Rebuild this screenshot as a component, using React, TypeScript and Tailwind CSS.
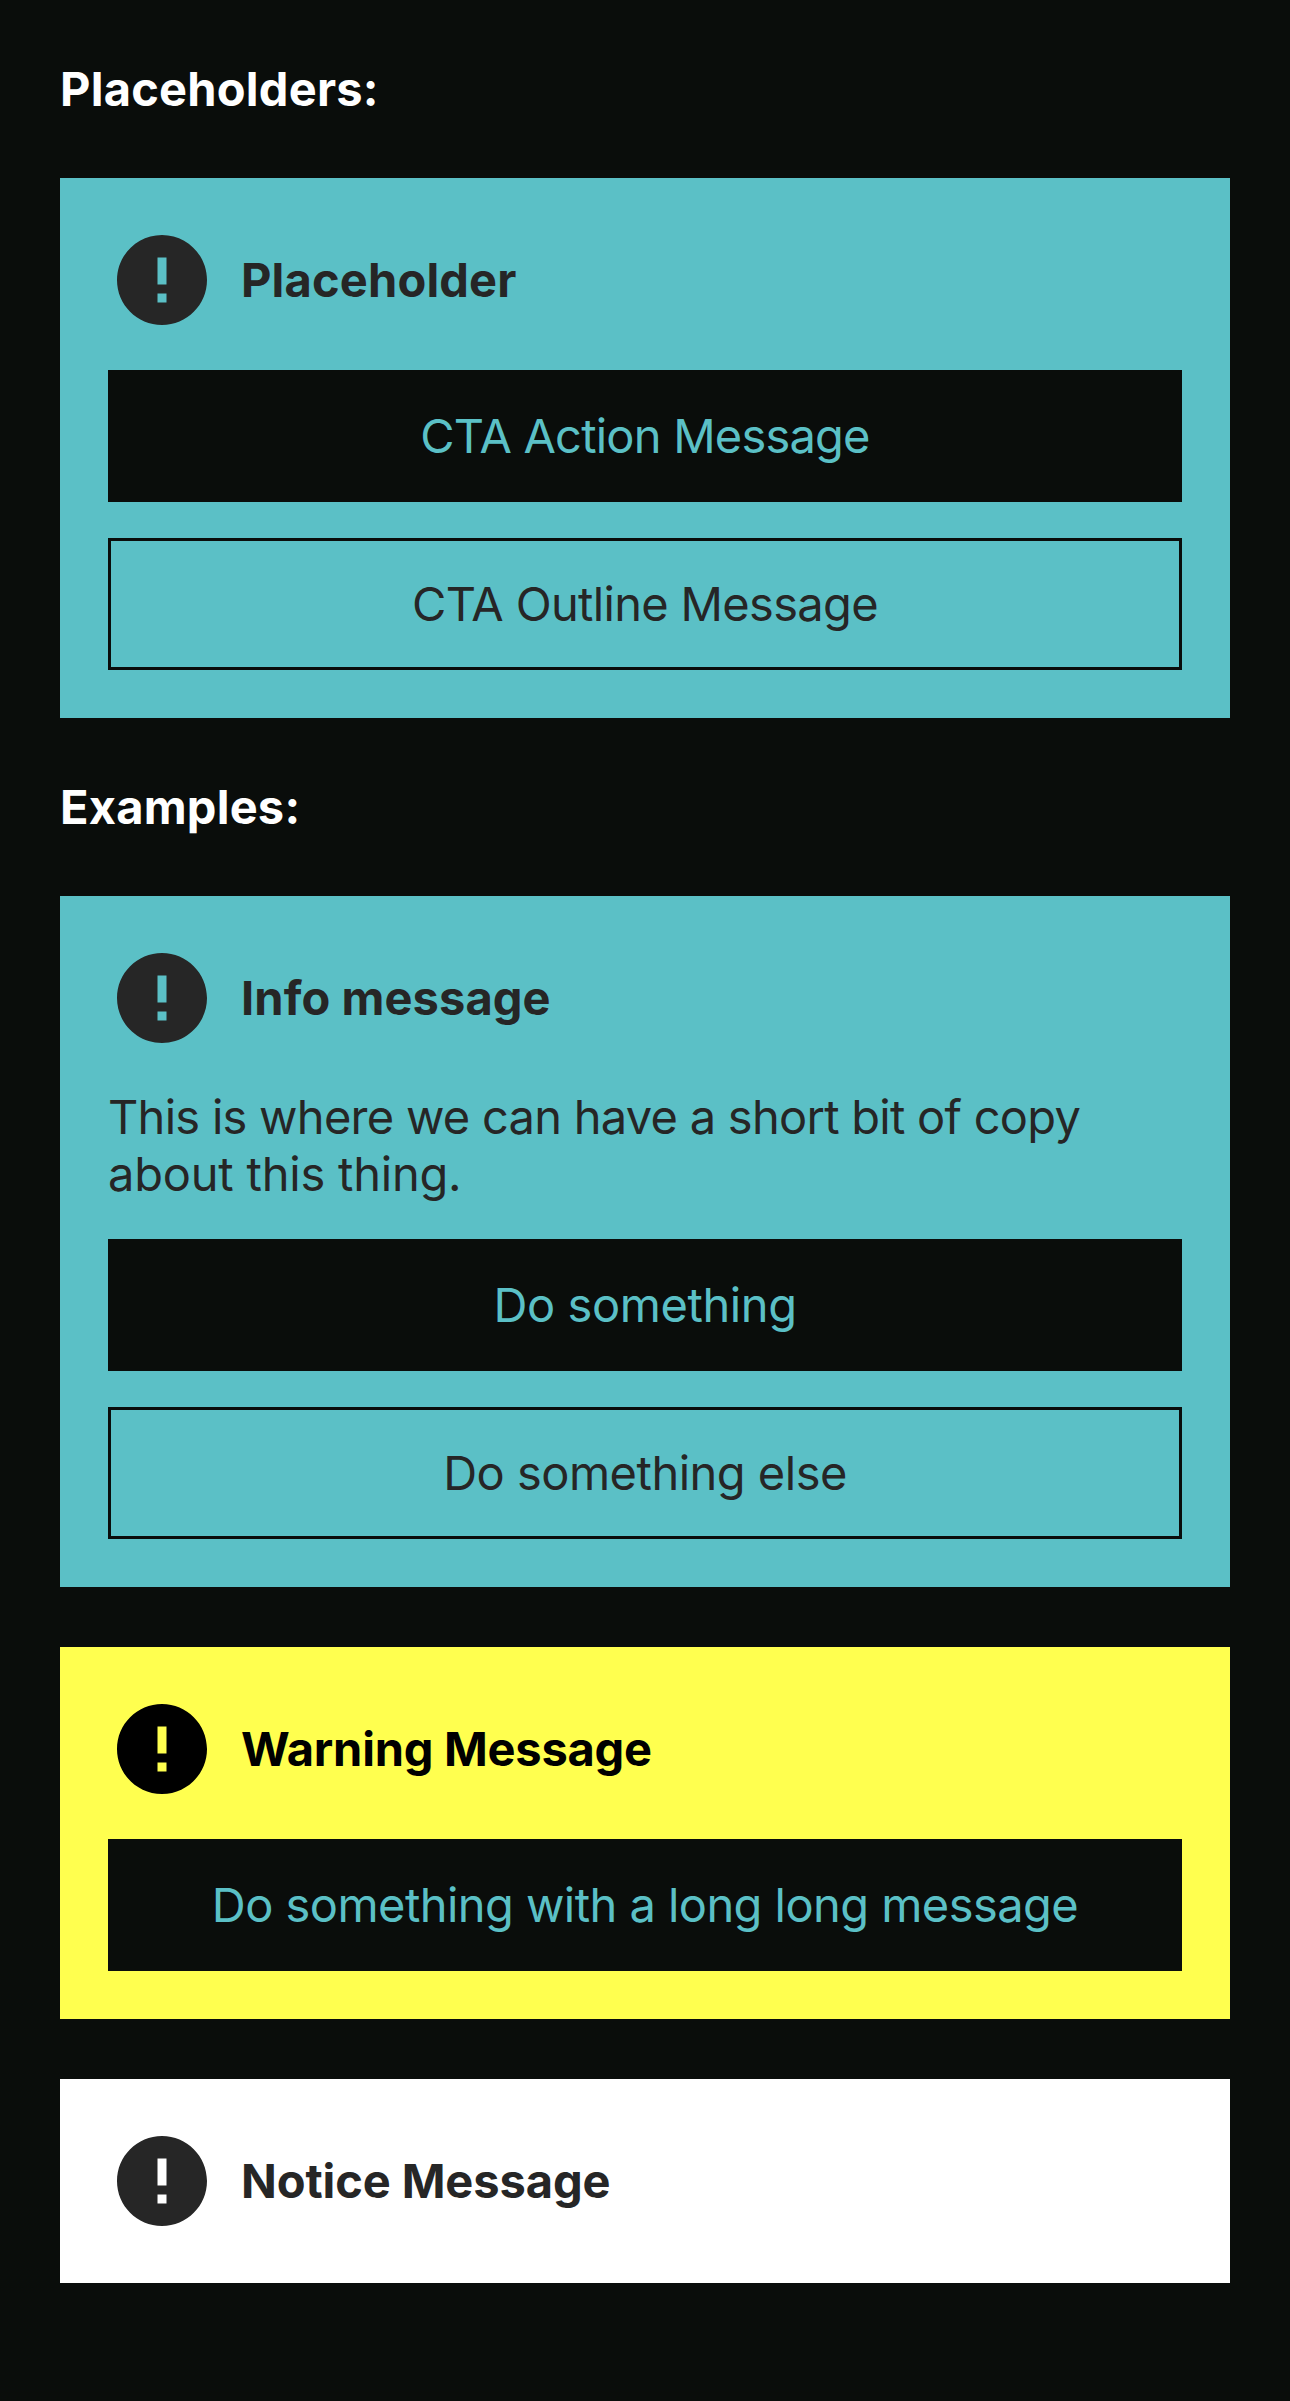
import type { ReactNode } from 'react';

function ErrorIcon() {
  return (
    <svg viewBox="0 0 24 24" className="size-27 shrink-0" fill="currentColor" aria-hidden="true">
      <path d="M12 2C6.48 2 2 6.48 2 12s4.48 10 10 10 10-4.48 10-10S17.52 2 12 2zm1 15h-2v-2h2v2zm0-4h-2V7h2v6z" />
    </svg>
  );
}

function SectionHeading({ children }: { children: ReactNode }) {
  return <h2 className="h-[58px] leading-[58px] font-bold tracking-[0.23px] text-white">{children}</h2>;
}

type CardProps = {
  title: string;
  tone: string;
  titleTracking: string;
  children?: ReactNode;
};

function MessageCard({ title, tone, titleTracking, children }: CardProps) {
  return (
    <section className={`flex flex-col gap-9 p-12 ${tone}`}>
      <header className="flex items-center gap-[25px]">
        <ErrorIcon />
        <h3 className={`pb-px font-bold ${titleTracking}`}>{title}</h3>
      </header>
      {children}
    </section>
  );
}

function ActionButton({ tracking, children }: { tracking: string; children: ReactNode }) {
  return (
    <button className={`flex h-33 w-full items-center justify-center bg-[#0a0d0b] pb-px text-[#5bc0c6] ${tracking}`}>
      {children}
    </button>
  );
}

function OutlineButton({ tracking, children }: { tracking: string; children: ReactNode }) {
  return (
    <button className={`flex h-33 w-full items-center justify-center border-3 border-[#0a0d0b] pb-px ${tracking}`}>
      {children}
    </button>
  );
}

export default function App() {
  return (
    <main className="flex min-h-[2401px] w-full flex-col gap-15 bg-[#0a0d0b] p-15 font-['Inter',sans-serif] text-[47px] leading-[57px]">
      <SectionHeading>Placeholders:</SectionHeading>

      <MessageCard title="Placeholder" tone="bg-[#5bc0c6] text-[#262626]" titleTracking="tracking-[0.17px]">
        <ActionButton tracking="tracking-[-0.79px]">CTA Action Message</ActionButton>
        <OutlineButton tracking="tracking-[-0.67px]">CTA Outline Message</OutlineButton>
      </MessageCard>

      <SectionHeading>Examples:</SectionHeading>

      <MessageCard title="Info message" tone="bg-[#5bc0c6] text-[#262626]" titleTracking="tracking-[0.09px]">
        <p className="flex h-[115px] flex-col whitespace-nowrap">
          <span className="tracking-[-0.73px]">This is where we can have a short bit of copy</span>
          <span className="tracking-[-0.21px]">about this thing.</span>
        </p>
        <ActionButton tracking="tracking-[-0.4px]">Do something</ActionButton>
        <OutlineButton tracking="tracking-[-0.5px]">Do something else</OutlineButton>
      </MessageCard>

      <MessageCard title="Warning Message" tone="bg-[#ffff4f] text-black" titleTracking="tracking-[-0.24px]">
        <ActionButton tracking="tracking-[-0.55px]">Do something with a long long message</ActionButton>
      </MessageCard>

      <MessageCard title="Notice Message" tone="bg-white text-[#262626]" titleTracking="tracking-[-0.1px]" />
    </main>
  );
}
